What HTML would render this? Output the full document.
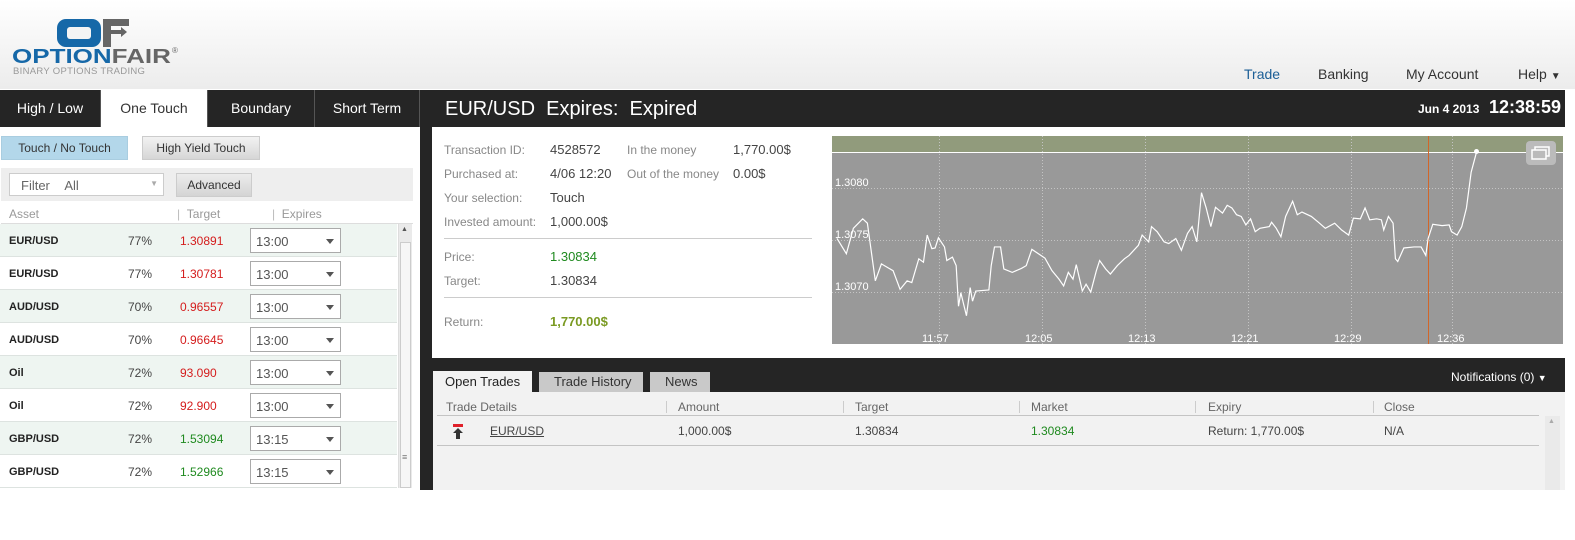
<!DOCTYPE html>
<html><head><meta charset="utf-8"><style>
*{margin:0;padding:0;box-sizing:border-box}
body{width:1575px;height:540px;background:#fff;font-family:"Liberation Sans",sans-serif;font-size:12px;color:#444;position:relative;overflow:hidden}
.a{position:absolute;white-space:nowrap;line-height:1.2}
#hdr{left:0;top:0;width:1575px;height:89px;background:linear-gradient(#fff,#ececec)}
.nav{top:66px;font-size:14px;color:#333}
.tab{top:90px;height:37px;background:#252525;color:#fff;font-size:14px;line-height:37px;text-align:center;border-right:1px solid #555}
.btn{height:24px;line-height:22px;font-size:12px;text-align:center;border:1px solid #ccc;color:#333}
.row{left:0;width:397px;height:33px;border-bottom:1px solid #dde3e0}
.row.o{background:#eef5f1}
.row span{position:absolute;top:10px;font-size:12px}
.row span.n{font-weight:bold;color:#222;font-size:11px;left:9px;top:11px}
.sel{position:absolute;left:250px;top:4px;width:91px;height:25px;border:1px solid #aaa;background:#fff;font-size:13px;color:#555;padding:5px 0 0 5px}
.sel:after{content:"";position:absolute;right:6px;top:10px;border:4px solid transparent;border-top:5px solid #555}
.lbl{color:#888;font-size:12px}
.val{color:#444;font-size:13px}
.th{top:400px;color:#666;font-size:12px}
.sep{top:401px;width:1px;height:12px;background:#ccc}
</style></head><body>
<div class="a" id="hdr"></div>
<!-- logo -->
<svg class="a" style="left:55px;top:18px" width="76" height="30">
<rect x="2" y="1" width="44" height="28" rx="9" fill="#1668a8"/>
<rect x="12" y="9" width="24" height="12" rx="3" fill="#f4f4f4"/>
<path d="M48 1 H74 V8 H56 V12 H66 V9 L72 14 L66 19 V16 H56 V29 H48 Z" fill="#666"/>
</svg>
<div class="a" style="left:12px;top:47px;font-size:20px;font-weight:bold;color:#1668a8;transform:scaleX(1.3);transform-origin:left top;line-height:20px">OPTION<span style="color:#666">FAIR</span></div>
<div class="a" style="left:172px;top:46px;font-size:8px;color:#666">®</div>
<div class="a" style="left:13px;top:67px;font-size:9.5px;color:#999;letter-spacing:0.3px;line-height:10px">BINARY OPTIONS TRADING</div>
<div class="a nav" style="left:1244px;color:#1b5e96">Trade</div>
<div class="a nav" style="left:1318px">Banking</div>
<div class="a nav" style="left:1406px">My Account</div>
<div class="a nav" style="left:1518px">Help <span style="font-size:10px">▼</span></div>

<!-- left tabs -->
<div class="a tab" style="left:0;width:101px">High / Low</div>
<div class="a tab" style="left:101px;width:107px;background:#fff;color:#333">One Touch</div>
<div class="a tab" style="left:208px;width:107px">Boundary</div>
<div class="a tab" style="left:315px;width:105px">Short Term</div>
<div class="a btn" style="left:1px;top:136px;width:127px;background:#b3d7ea;border-color:#a9cde0">Touch / No Touch</div>
<div class="a btn" style="left:142px;top:136px;width:118px;background:linear-gradient(#f2f2f2,#d6d6d6)">High Yield Touch</div>
<div class="a" style="left:1px;top:168px;width:412px;height:33px;background:#eee"></div>
<div class="a" style="left:9px;top:173px;width:155px;height:23px;background:#fff;border:1px solid #ccc;font-size:13px;color:#666;padding:4px 0 0 11px">Filter &nbsp;&nbsp;&nbsp;All<span style="position:absolute;right:5px;top:5px;font-size:8px;color:#aaa">▼</span></div>
<div class="a btn" style="left:176px;top:173px;width:76px;height:24px;background:linear-gradient(#ececec,#d4d4d4)">Advanced</div>
<div class="a" style="left:9px;top:207px;color:#999">Asset</div>
<div class="a" style="left:177px;top:207px;color:#bbb">|&nbsp;&nbsp;<span style="color:#999">Target</span></div>
<div class="a" style="left:272px;top:207px;color:#bbb">|&nbsp;&nbsp;<span style="color:#999">Expires</span></div>
<div class="a" style="left:1px;top:223px;width:412px;height:1px;background:#ddd"></div>

<div class="a row o" style="top:224px"><span class="n">EUR/USD</span><span style="left:128px">77%</span><span style="left:180px;color:#d41c1c">1.30891</span><div class="sel">13:00</div></div>
<div class="a row" style="top:257px"><span class="n">EUR/USD</span><span style="left:128px">77%</span><span style="left:180px;color:#d41c1c">1.30781</span><div class="sel">13:00</div></div>
<div class="a row o" style="top:290px"><span class="n">AUD/USD</span><span style="left:128px">70%</span><span style="left:180px;color:#d41c1c">0.96557</span><div class="sel">13:00</div></div>
<div class="a row" style="top:323px"><span class="n">AUD/USD</span><span style="left:128px">70%</span><span style="left:180px;color:#d41c1c">0.96645</span><div class="sel">13:00</div></div>
<div class="a row o" style="top:356px"><span class="n">Oil</span><span style="left:128px">72%</span><span style="left:180px;color:#d41c1c">93.090</span><div class="sel">13:00</div></div>
<div class="a row" style="top:389px"><span class="n">Oil</span><span style="left:128px">72%</span><span style="left:180px;color:#d41c1c">92.900</span><div class="sel">13:00</div></div>
<div class="a row o" style="top:422px"><span class="n">GBP/USD</span><span style="left:128px">72%</span><span style="left:180px;color:#1f8a1f">1.53094</span><div class="sel">13:15</div></div>
<div class="a row" style="top:455px"><span class="n">GBP/USD</span><span style="left:128px">72%</span><span style="left:180px;color:#1f8a1f">1.52966</span><div class="sel">13:15</div></div>
<div class="a" style="left:398px;top:224px;width:14px;height:264px;background:#eaeaea;border-left:1px solid #ddd"></div>
<div class="a" style="left:400px;top:242px;width:11px;height:246px;background:#f6f6f6;border:1px solid #ccc"></div>
<div class="a" style="left:401px;top:226px;font-size:7px;color:#555">▲</div>
<div class="a" style="left:402px;top:452px;font-size:9px;color:#777">≡</div>

<!-- right -->
<div class="a" style="left:420px;top:90px;width:1145px;height:400px;background:#252525"></div>
<div class="a" style="left:445px;top:97px;font-size:20px;color:#fff">EUR/USD &nbsp;Expires: &nbsp;Expired</div>
<div class="a" style="left:1418px;top:102px;font-size:12px;font-weight:bold;color:#fff">Jun 4 2013</div>
<div class="a" style="left:1489px;top:97px;font-size:18px;font-weight:bold;color:#fff">12:38:59</div>
<div class="a" style="left:432px;top:127px;width:1133px;height:231px;background:#fff"></div>
<div class="a lbl" style="left:444px;top:143px">Transaction ID:</div><div class="a val" style="left:550px;top:142px">4528572</div>
<div class="a lbl" style="left:627px;top:143px">In the money</div><div class="a val" style="left:733px;top:142px">1,770.00$</div>
<div class="a lbl" style="left:444px;top:167px">Purchased at:</div><div class="a val" style="left:550px;top:166px">4/06 12:20</div>
<div class="a lbl" style="left:627px;top:167px">Out of the money</div><div class="a val" style="left:733px;top:166px">0.00$</div>
<div class="a lbl" style="left:444px;top:191px">Your selection:</div><div class="a val" style="left:550px;top:190px">Touch</div>
<div class="a lbl" style="left:444px;top:215px">Invested amount:</div><div class="a val" style="left:550px;top:214px">1,000.00$</div>
<div class="a" style="left:444px;top:238px;width:368px;height:1px;background:#ccc"></div>
<div class="a lbl" style="left:444px;top:250px">Price:</div><div class="a val" style="left:550px;top:249px;color:#1f8a1f">1.30834</div>
<div class="a lbl" style="left:444px;top:274px">Target:</div><div class="a val" style="left:550px;top:273px">1.30834</div>
<div class="a" style="left:444px;top:297px;width:368px;height:1px;background:#ccc"></div>
<div class="a lbl" style="left:444px;top:315px">Return:</div><div class="a" style="left:550px;top:314px;font-size:13px;font-weight:bold;color:#7a9a22">1,770.00$</div>

<!-- chart -->
<div class="a" style="left:832px;top:136px;width:731px;height:208px;background:#999"></div>
<div class="a" style="left:832px;top:136px;width:731px;height:16px;background:#919b7c"></div>
<svg class="a" style="left:832px;top:136px" width="731" height="208">
<g stroke="#c4c4c4" stroke-dasharray="1,2" stroke-width="1">
<line x1="0" y1="52.5" x2="731" y2="52.5"/><line x1="0" y1="104.5" x2="731" y2="104.5"/><line x1="0" y1="156.5" x2="731" y2="156.5"/>
<line x1="107.5" y1="0" x2="107.5" y2="208"/><line x1="210.5" y1="0" x2="210.5" y2="208"/><line x1="313.5" y1="0" x2="313.5" y2="208"/><line x1="416.5" y1="0" x2="416.5" y2="208"/><line x1="519.5" y1="0" x2="519.5" y2="208"/><line x1="620.5" y1="0" x2="620.5" y2="208"/>
</g>
<line x1="0" y1="16.5" x2="731" y2="16.5" stroke="#fff"/>
<line x1="596.5" y1="0" x2="596.5" y2="208" stroke="#d0662a"/>
<g fill="#fff" font-size="11" font-family="Liberation Sans,sans-serif">
<text x="3" y="50">1.3080</text><text x="3" y="102">1.3075</text><text x="3" y="154">1.3070</text>
<text x="90" y="206">11:57</text><text x="193" y="206">12:05</text><text x="296" y="206">12:13</text><text x="399" y="206">12:21</text><text x="502" y="206">12:29</text><text x="605" y="206">12:36</text>
</g>
<rect x="694" y="5" width="30" height="24" rx="4" fill="#bbb"/>
<rect x="703" y="11" width="14" height="9" fill="none" stroke="#fff" stroke-width="1.5"/><rect x="700" y="14" width="14" height="9" fill="#bbb" stroke="#fff" stroke-width="1.5"/>
</svg>
<svg class="a" style="left:830px;top:130px" width="740" height="220" viewBox="0 0 1583.6 649" preserveAspectRatio="none">
<polyline fill="none" stroke="#fff" stroke-width="1.2" vector-effect="non-scaling-stroke" points="15,320 35,365 50,290 70,262 80,275 97,445 110,395 135,415 150,470 165,445 175,450 190,380 200,390 208,310 218,350 225,348 232,318 245,345 250,385 262,375 270,400 275,520 280,480 292,548 300,465 305,505 312,475 340,472 345,400 352,345 365,345 372,410 390,420 410,408 420,400 432,352 460,378 475,415 490,440 500,460 510,420 520,440 527,397 540,475 548,455 558,478 570,415 577,385 590,410 600,425 615,400 630,380 640,370 660,340 668,310 682,330 688,285 700,300 715,330 725,335 740,320 752,355 765,305 775,285 785,330 795,185 805,230 815,285 825,228 840,245 850,222 860,230 870,250 880,255 890,280 900,262 910,300 920,290 940,285 945,272 955,290 965,315 975,255 990,210 1000,250 1010,242 1030,255 1045,272 1060,290 1080,275 1095,295 1110,310 1120,260 1135,262 1145,230 1155,265 1170,262 1180,265 1185,295 1195,255 1205,275 1210,380 1215,388 1228,348 1250,345 1265,345 1275,370 1280,320 1290,278 1310,282 1325,280 1330,300 1342,310 1352,285 1362,230 1372,125 1383,68"/>
</svg>
<div class="a" style="left:1474px;top:149px;width:5px;height:5px;border-radius:50%;background:#fff"></div>

<!-- bottom -->
<div class="a" style="left:433px;top:371px;width:99px;height:21px;background:#f2f2f2;font-size:13px;color:#222;padding:3px 0 0 12px">Open Trades</div>
<div class="a" style="left:539px;top:372px;width:104px;height:20px;background:#c9c9c9;font-size:13px;color:#333;padding:2px 0 0 15px">Trade History</div>
<div class="a" style="left:650px;top:372px;width:60px;height:20px;background:#c9c9c9;font-size:13px;color:#333;padding:2px 0 0 15px">News</div>
<div class="a" style="left:1451px;top:370px;font-size:12px;color:#fff">Notifications (0) <span style="font-size:9px">▼</span></div>
<div class="a" style="left:433px;top:392px;width:1132px;height:98px;background:#f2f2f2"></div>
<div class="a th" style="left:446px">Trade Details</div>
<div class="a sep" style="left:666px"></div><div class="a th" style="left:678px">Amount</div>
<div class="a sep" style="left:843px"></div><div class="a th" style="left:855px">Target</div>
<div class="a sep" style="left:1019px"></div><div class="a th" style="left:1031px">Market</div>
<div class="a sep" style="left:1195px"></div><div class="a th" style="left:1208px">Expiry</div>
<div class="a sep" style="left:1373px"></div><div class="a th" style="left:1384px">Close</div>
<div class="a" style="left:437px;top:415px;width:1102px;height:1px;background:#c4c4c4"></div>
<div class="a" style="left:437px;top:445px;width:1102px;height:1px;background:#c4c4c4"></div>
<div class="a" style="left:453px;top:424px;width:10px;height:3px;background:#e0202a"></div>
<svg class="a" style="left:453px;top:428px" width="10" height="11"><polygon points="5,0 10,5 7,5 7,11 3,11 3,5 0,5" fill="#333"/></svg>
<div class="a" style="left:490px;top:424px;font-size:12px;color:#444;text-decoration:underline">EUR/USD</div>
<div class="a" style="left:678px;top:424px;font-size:12px;color:#444">1,000.00$</div>
<div class="a" style="left:855px;top:424px;font-size:12px;color:#444">1.30834</div>
<div class="a" style="left:1031px;top:424px;font-size:12px;color:#1f8a1f">1.30834</div>
<div class="a" style="left:1208px;top:424px;font-size:12px;color:#444">Return: 1,770.00$</div>
<div class="a" style="left:1384px;top:424px;font-size:12px;color:#444">N/A</div>
<div class="a" style="left:1545px;top:416px;width:15px;height:74px;background:#eaeaea"></div>
<div class="a" style="left:1548px;top:418px;font-size:7px;color:#aaa">▲</div>
</body></html>
